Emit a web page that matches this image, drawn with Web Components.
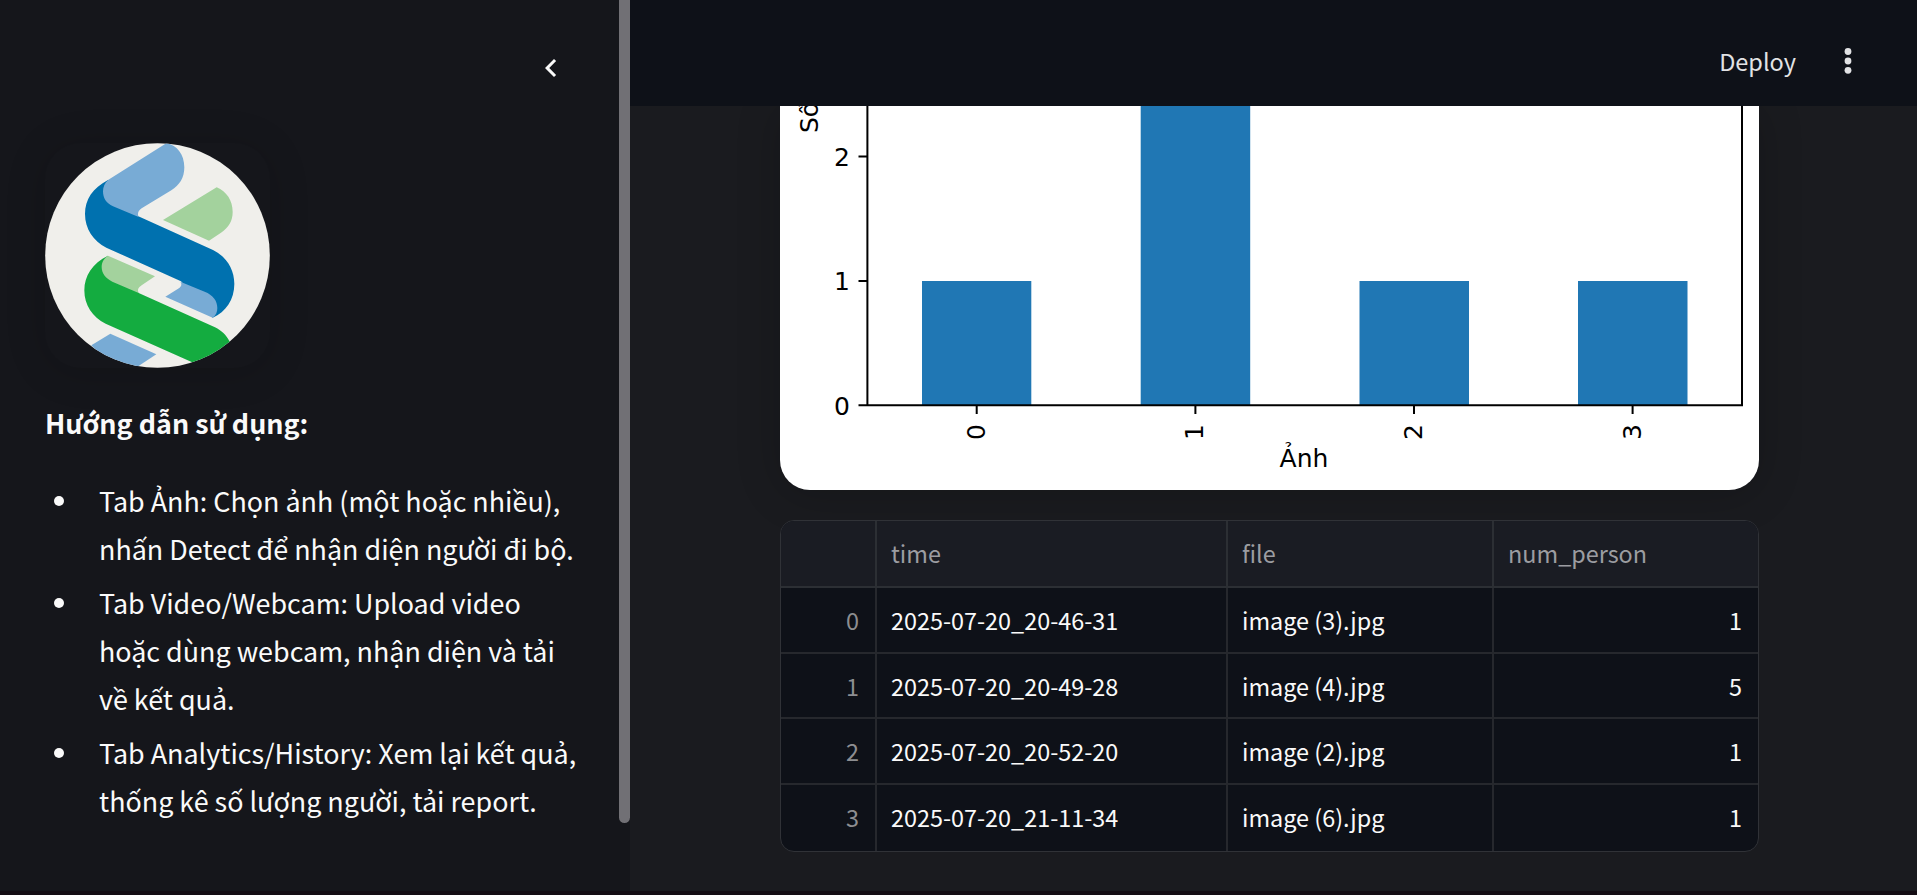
<!DOCTYPE html>
<html lang="vi">
<head>
<meta charset="utf-8">
<title>Analytics</title>
<style>
html,body{margin:0;height:100%;overflow:hidden;background:#1a1a1f}
body{font-family:"Noto Sans CJK SC","Noto Sans",sans-serif;color:#fafafa}
</style>
</head>
<body>
<app-shell>
  <side-bar slot="side">
    <guide-list>
      <span slot="title">Hướng dẫn sử dụng:</span>
      <guide-item>Tab Ảnh: Chọn ảnh (một hoặc nhiều),<br>nhấn Detect để nhận diện người đi bộ.</guide-item>
      <guide-item>Tab Video/Webcam: Upload video<br>hoặc dùng webcam, nhận diện và tải<br>về kết quả.</guide-item>
      <guide-item>Tab Analytics/History: Xem lại kết quả,<br>thống kê số lượng người, tải report.</guide-item>
    </guide-list>
  </side-bar>
  <tool-bar slot="top">Deploy</tool-bar>
  <bar-chart></bar-chart>
  <data-table></data-table>
</app-shell>
<script>
const define = (name, html, init) => customElements.define(name, class extends HTMLElement {
  constructor() {
    super();
    this.attachShadow({ mode: 'open' }).innerHTML = html;
    if (init) init(this.shadowRoot);
  }
});

define('app-shell', `
<style>
:host{display:grid;grid-template-columns:630px 1fr;width:100%;height:891px;overflow:hidden;border-bottom:4px solid #140d14;background:#1a1b1f}
.main{display:flex;flex-direction:column;min-width:0;overflow:hidden}
.body{flex:1;display:flex;flex-direction:column;gap:30px;padding:0 158px 0 150px;overflow:hidden}
</style>
<slot name="side"></slot>
<div class="main"><slot name="top"></slot><div class="body"><slot></slot></div></div>`);

define('side-bar', `
<style>
:host{display:flex;background:#15161b;height:891px;overflow:hidden}
.content{flex:1;display:flex;flex-direction:column;padding-left:45px}
.head{height:143px;display:flex;justify-content:flex-end;box-sizing:border-box;padding:50px 50px 0 0}
.chev{display:block;width:36px;height:36px}
.bar{width:11px;height:823px;background:#717075;border-radius:0 0 6px 6px}
</style>
<div class="content">
  <div class="head"><svg class="chev" viewBox="0 0 24 24"><path fill="#fafafa" d="M15.41 7.41 14 6l-6 6 6 6 1.41-1.41L10.83 12z"/></svg></div>
  <brand-logo></brand-logo>
  <slot></slot>
</div>
<div class="bar"></div>`);

define('brand-logo', `
<style>
:host{display:block;width:225px;height:225px;border-radius:36px;box-shadow:0 4px 40px rgba(0,0,0,.16)}
svg{display:block}
</style>
<svg width="225" height="225" viewBox="45 39 675 675">
<defs><clipPath id="c"><circle cx="382.5" cy="376.500" r="337"/></clipPath></defs>
<g clip-path="url(#c)">
<rect x="45" y="39" width="675" height="675" fill="#f0efeb"/>
<path fill="#0071af" d="M234 150C188 174 165 209 165 252C165 296 190 334 229 353L453 454L548 563C588 546 613 508 613 462C613 417 589 380 549 360L325 259Z"/>
<path fill="#78abd5" d="M234 150L410 39C441 46 463 73 463 112C463 144 448 166 424 181L335 235C324 243 322 251 326 261L249 229C229 219 219 205 219 184C219 171 224 159 234 150Z"/>
<path fill="#a3d29d" d="M399 270L560 172C590 185 608 211 608 246C608 273 596 293 573 308L537 332Z"/>
<path fill="#14ac40" d="M234 377C187 400 163 437 163 481C163 525 187 562 227 581L490 698L650 680L598 633C588 615 575 602 555 592L326 489Z"/>
<path fill="#a3d29d" d="M234 377L375 439L335 466C324 473 322 480 326 489L247 455C227 445 215 430 215 411C215 396 222 385 234 377Z"/>
<path fill="#78abd5" d="M406 500L443 477C454 470 457 464 451 455L524 485C549 495 562 512 562 534C562 545 558 557 548 563Z"/>
<path fill="#78abd5" d="M184 646L241 611L379 673L320 712L250 720Z"/>
</g></svg>`);

define('guide-list', `
<style>
:host{display:block;padding-top:31px}
.t{font-weight:700;font-size:26.9px;line-height:48px;letter-spacing:0;margin-bottom:30px}
</style>
<div class="t"><slot name="title"></slot></div><slot></slot>`);

define('guide-item', `
<style>
:host{display:flex;font-size:26.9px;line-height:48px;margin-bottom:6px;white-space:nowrap}
i{flex:none;width:10px;height:10px;border-radius:50%;background:#fafafa;margin:19px 35px 0 9px}
</style>
<i></i><div><slot></slot></div>`);

define('tool-bar', `
<style>
:host{display:flex;flex:none;height:106px;background:#0e1118;align-items:flex-start;justify-content:flex-end;box-sizing:border-box;padding-right:52px;color:#e2e3e5}
span{font-size:23.5px;line-height:36px;margin-top:43px}
svg{display:block;width:34px;height:34px;margin:44px 0 0 35px}
</style>
<span><slot></slot></span>
<svg viewBox="0 0 34 34" fill="#e2e3e5"><circle cx="17" cy="7.500" r="3.400"/><circle cx="17" cy="17" r="3.400"/><circle cx="17" cy="26.300" r="3.400"/></svg>`);

define('bar-chart', `
<style>
:host{display:block;flex:none;height:384px;background:#fff;border-radius:0 0 30px 30px;box-shadow:0 4px 45px rgba(0,0,0,.2)}
svg{display:block;font-family:"DejaVu Sans",sans-serif;font-size:25px}
</style>
<svg width="979" height="384" viewBox="780 106 979 384">
<g fill="#2077b4"><rect x="922" y="281" width="109.300" height="124"/><rect x="1140.700" y="106" width="109.500" height="299"/><rect x="1359.500" y="281" width="109.500" height="124"/><rect x="1578" y="281" width="109.500" height="124"/></g>
<g stroke="#000" stroke-width="2" fill="none"><path d="M867.400 106V405.300M1742 106V406.300M858.500 405.300H1743M858.500 156.400H867M858.500 281H867M976.700 405V414M1195.400 405V414M1414 405V414M1632.600 405V414"/></g>
<g text-anchor="end" fill="#000"><text x="850" y="165.500">2</text><text x="850" y="290.300">1</text><text x="850" y="414.500">0</text></g>
<g fill="#000" text-anchor="middle">
<text transform="translate(984.700 432) rotate(-90)">0</text><text transform="translate(1203.400 432) rotate(-90)">1</text><text transform="translate(1422 432) rotate(-90)">2</text><text transform="translate(1640.600 432) rotate(-90)">3</text>
<text x="1304" y="467">Ảnh</text></g>
<text transform="translate(818 133) rotate(-90)">Số lượng người</text>
</svg>`);

define('data-table', `
<style>
:host{display:block;flex:none;box-sizing:border-box;height:332px;border:1px solid #303237;border-radius:14px;overflow:hidden;background:#0e1118;font-size:23.4px}
.r{display:grid;grid-template-columns:96px 351px 266px 1fr;height:65.700px;box-sizing:border-box;border-bottom:2px solid #26282d}
.r:last-child{border:0}
.r.h{background:#1a1c23;color:#9c9da1;height:67px;border-color:#2c2f34}
.r>div{border-right:2px solid #26282d;padding:0 14px;line-height:64px;white-space:nowrap;box-sizing:border-box}
.r.h>div{border-color:#2c2f34}
.r>div:last-child{border:0}
.r>.i{color:#8d8e91;text-align:right;padding-right:16px}
.n{text-align:right}
.r>.n{padding-right:16px}
</style>
<div class="r h"><div></div><div>time</div><div>file</div><div>num_person</div></div>
<div id="rows" style="display:contents"></div>`, root => {
  root.getElementById('rows').innerHTML = [
    ['2025-07-20_20-46-31', 'image (3).jpg', 1],
    ['2025-07-20_20-49-28', 'image (4).jpg', 5],
    ['2025-07-20_20-52-20', 'image (2).jpg', 1],
    ['2025-07-20_21-11-34', 'image (6).jpg', 1]
  ].map((r, i) => `<div class="r"><div class="i">${i}</div><div>${r[0]}</div><div>${r[1]}</div><div class="n">${r[2]}</div></div>`).join('');
});
</script>
</body>
</html>
